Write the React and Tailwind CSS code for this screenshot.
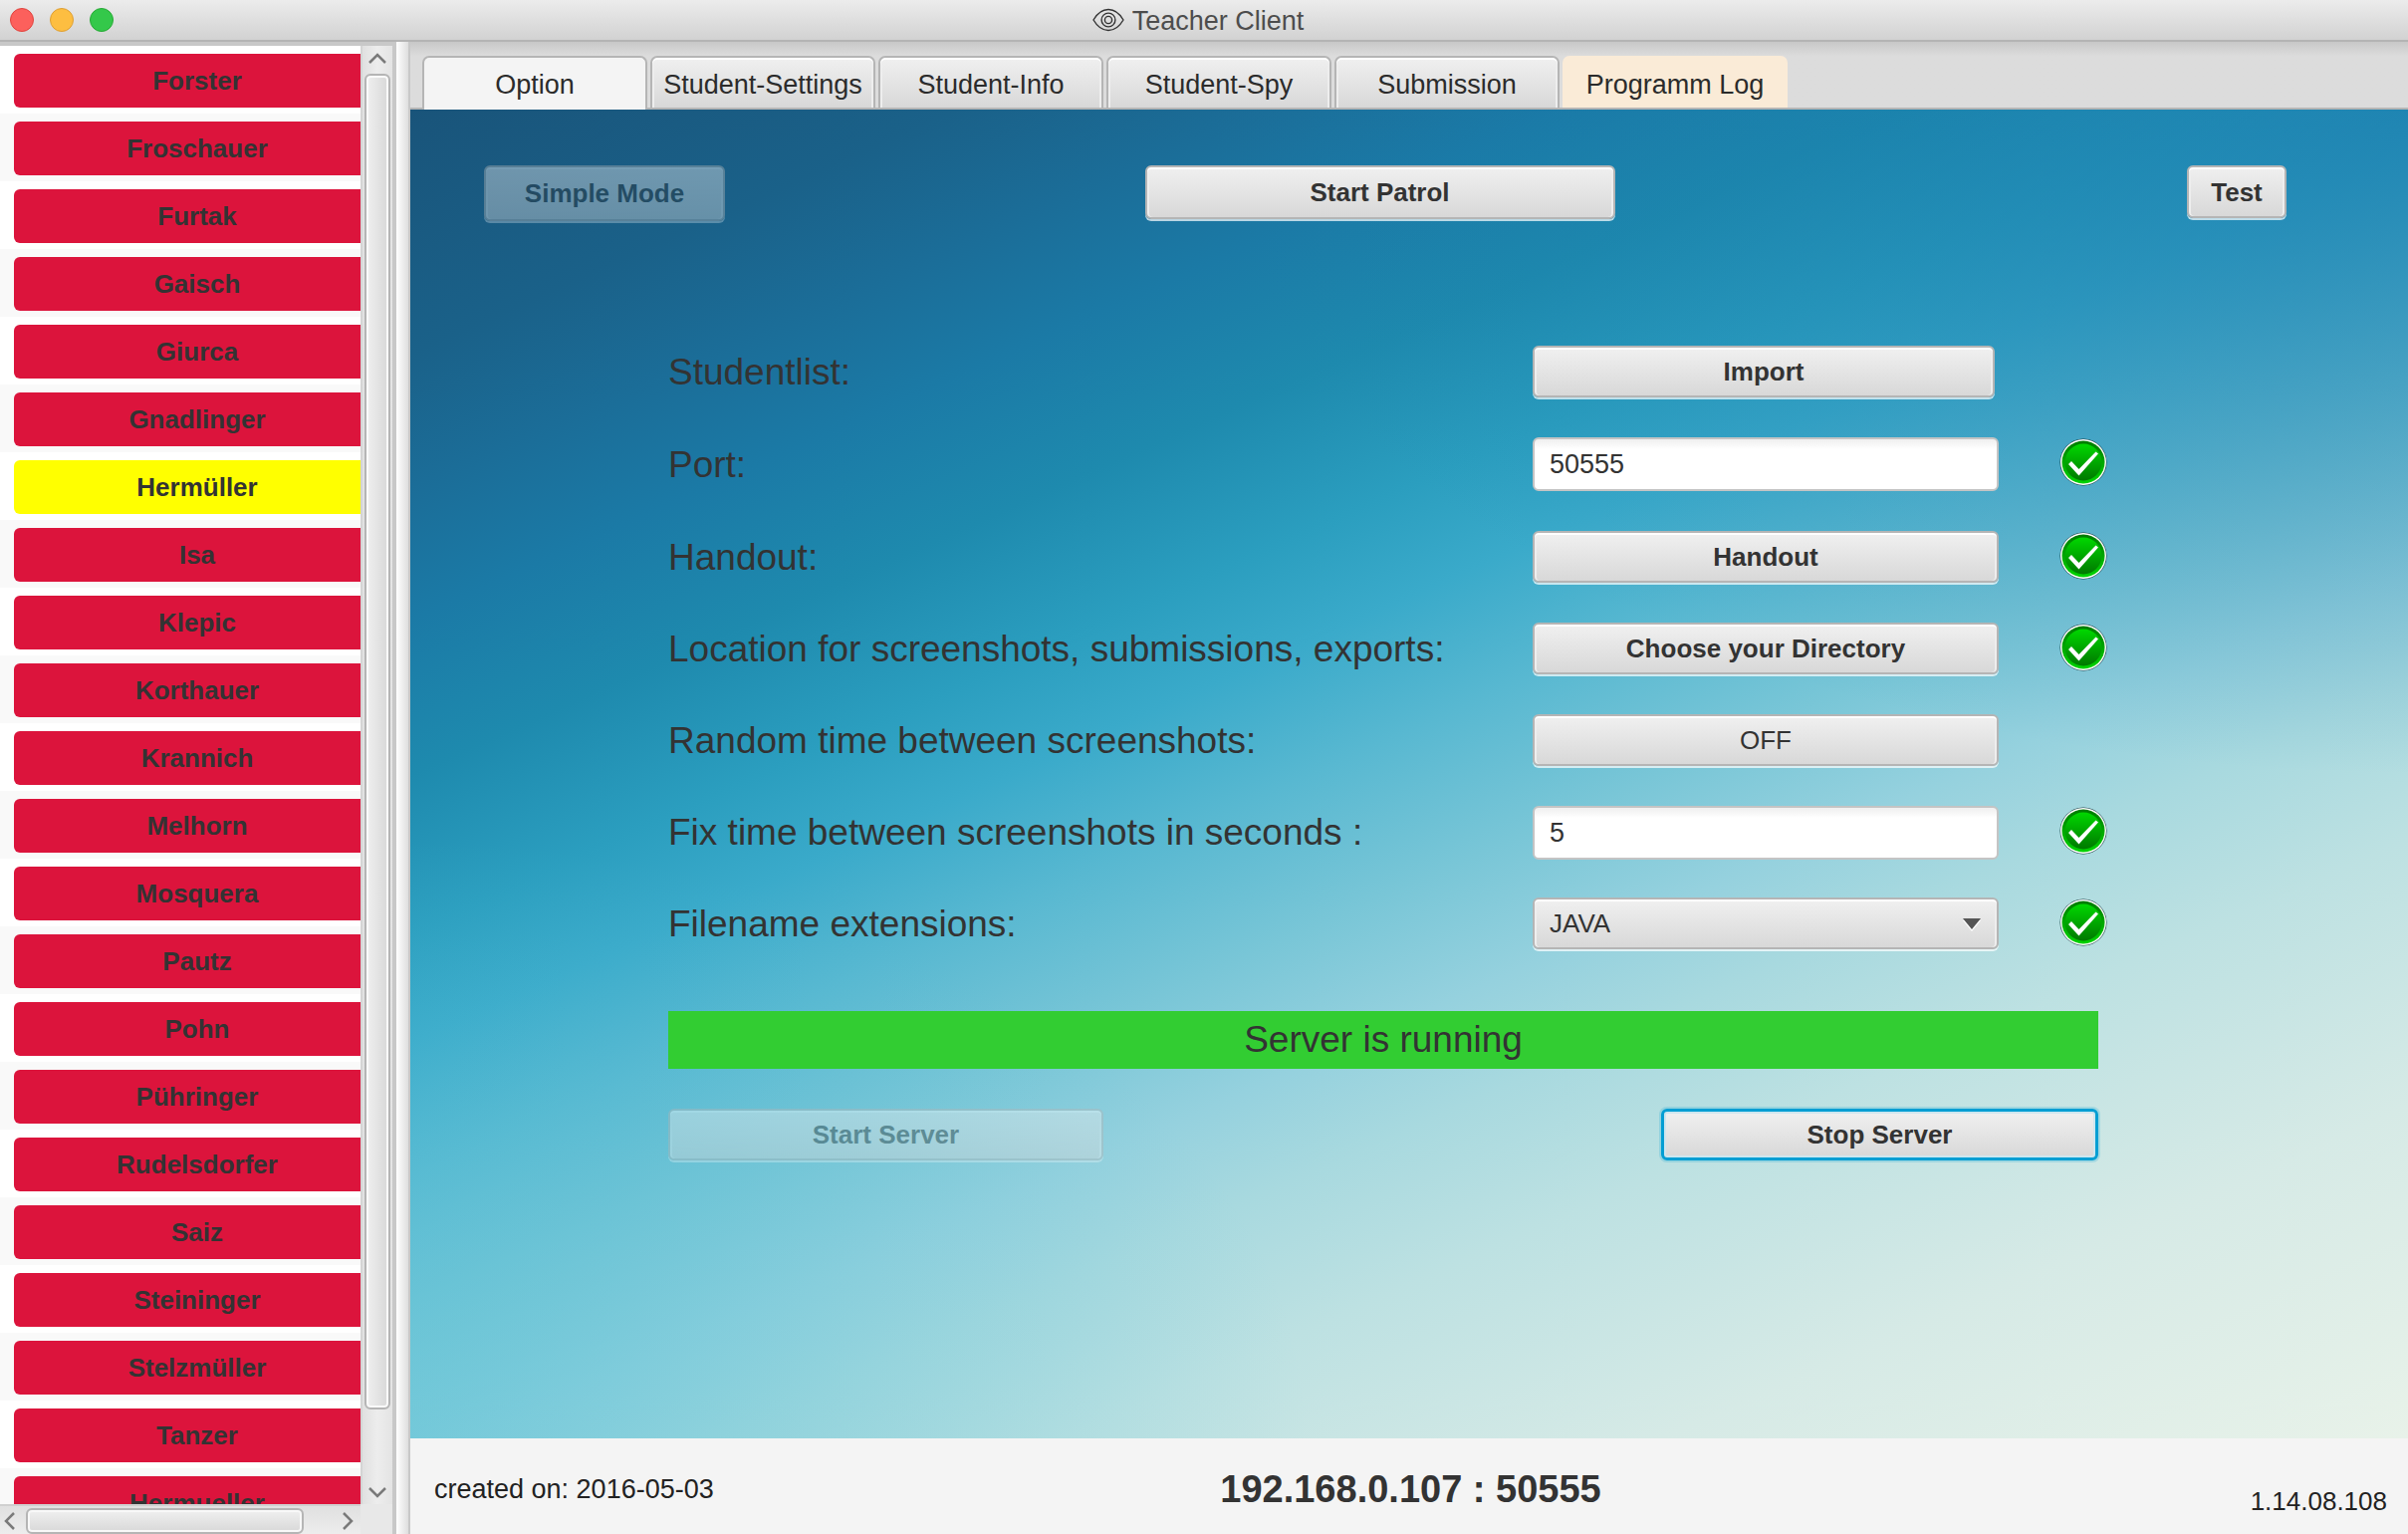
import React, { useState } from "react";

const students = [
  "Forster", "Froschauer", "Furtak", "Gaisch", "Giurca", "Gnadlinger", "Hermüller", "Isa",
  "Klepic", "Korthauer", "Krannich", "Melhorn", "Mosquera", "Pautz", "Pohn", "Pühringer",
  "Rudelsdorfer", "Saiz", "Steininger", "Stelzmüller", "Tanzer", "Hermueller",
];

const tabs = ["Option", "Student-Settings", "Student-Info", "Student-Spy", "Submission", "Programm Log"];

const buttonBase =
  "rounded-[6px] border-2 border-[#b5b5b5] bg-linear-to-b from-[#f0f0f0] to-[#d8d8d8] text-[26px] leading-[30px] text-[#333] ";
const raised = "shadow-[inset_0_2px_0_#fff,inset_2px_0_0_#eee,inset_-2px_0_0_#eee,0_2px_0_rgba(255,255,255,0.7)] ";

function Button({ className = "", ...props }) {
  return <button type="button" className={buttonBase + raised + className} {...props} />;
}

function Eye() {
  return (
    <svg width="32" height="24" viewBox="0 0 32 24" fill="none" stroke="#333" strokeWidth="1.4" aria-hidden="true">
      <path d="M1 12C4.500 6 9 1.500 16 1.500S27.500 6 31 12C27.500 18 23 22.500 16 22.500S4.500 18 1 12Z" />
      <circle cx="16" cy="12" r="6.900" />
      <circle cx="16" cy="12" r="3.600" />
    </svg>
  );
}

function Check() {
  return (
    <svg width="48" height="48" viewBox="0 0 48 48" role="img" aria-label="valid">
      <defs>
        <linearGradient id="checkFace" x1="0" y1="0" x2="0" y2="1">
          <stop offset="0" stopColor="#00d800" />
          <stop offset="1" stopColor="#007800" />
        </linearGradient>
        <linearGradient id="checkRim" x1="0" y1="0" x2="0" y2="1">
          <stop offset="0" stopColor="#007a00" />
          <stop offset="1" stopColor="#00d400" />
        </linearGradient>
      </defs>
      <circle cx="24" cy="24" r="23.500" fill="#12393c" />
      <circle cx="24" cy="24" r="23" fill="#fff" />
      <circle cx="24" cy="24" r="21.500" fill="url(#checkRim)" />
      <circle cx="24" cy="24" r="18.500" fill="url(#checkFace)" />
      <path d="M9 26L12 23L19.500 31L36.500 13.500L39 15.500L19.500 37.500Z" fill="#fff" />
    </svg>
  );
}

function Chevron({ d, label, className, w, h }) {
  return (
    <button type="button" aria-label={label} className={"flex shrink-0 items-center justify-center " + className}>
      <svg width={w} height={h} viewBox={`0 0 ${w} ${h}`} fill="none" stroke="#7a7a7a" strokeWidth="2.500">
        <path d={d} />
      </svg>
    </button>
  );
}

function Sidebar() {
  const [selected, setSelected] = useState("Hermüller");
  return (
    <aside className="flex w-[394px] shrink-0 flex-col border-t-4 border-[#c8c8c8] bg-white">
      <div className="flex min-h-0 flex-1">
        <ul className="min-w-0 flex-1 overflow-hidden">
          {students.map((name) => (
            <li key={name} className="h-[68px] pt-2 pl-[14px] odd:bg-white even:bg-[#f9f9f9]">
              <button
                type="button"
                onClick={() => setSelected(name)}
                className={
                  "h-[54px] w-full rounded-l-[6px] pr-2 pl-7 text-[26px] leading-[30px] font-bold text-[#333] " +
                  (name === selected ? "bg-[#ffff00]" : "bg-[#dc143c]")
                }
              >
                {name}
              </button>
            </li>
          ))}
        </ul>
        <div className="flex w-8 flex-col items-center border-l-2 border-[#d4d4d4] bg-linear-to-r from-[#e0e0e0] via-[#ededed] to-[#e4e4e4]">
          <Chevron label="Scroll up" w={18} h={11} d="M1 10L9 2L17 10" className="h-7 w-full pb-1" />
          <div className="flex min-h-0 w-[26px] flex-1 flex-col">
            <div className="h-[95%] rounded-[6px] border-2 border-[#b5b5b5] bg-linear-to-r from-[#f0f0f0] to-[#d8d8d8] shadow-[inset_0_0_0_2px_#fafafa]" />
          </div>
          <Chevron label="Scroll down" w={18} h={11} d="M1 1L9 9L17 1" className="h-6 w-full" />
        </div>
      </div>
      <div className="flex h-[30px] shrink-0">
        <div className="flex min-w-0 flex-1 items-end border-t-2 border-[#d0d0d0] bg-linear-to-b from-[#e0e0e0] to-[#ededed]">
          <Chevron label="Scroll left" w={11} h={18} d="M10 1L2 9L10 17" className="h-[26px] w-[26px] pr-2" />
          <div className="flex min-w-0 flex-1">
            <div className="h-[26px] w-[90%] rounded-[6px] border-2 border-[#b5b5b5] bg-linear-to-b from-[#f0f0f0] to-[#d8d8d8] shadow-[inset_0_0_0_2px_#f8f8f8]" />
          </div>
          <Chevron label="Scroll right" w={11} h={18} d="M1 1L9 9L1 17" className="h-[26px] w-[26px]" />
        </div>
        <div className="w-8 bg-[#e8e8e8]" />
      </div>
    </aside>
  );
}

function Field({ id, label, children, ok, tall }) {
  return (
    <div className="flex items-start">
      <label htmlFor={id} className={"flex min-w-0 flex-1 items-center text-[37px] leading-[42px] text-[#333] " + (tall ? "h-14" : "h-[54px]")}>
        {label}
      </label>
      <div className="flex w-[468px] shrink-0">{children}</div>
      <div className="ml-[61px] w-12 shrink-0 pt-px">{ok && <Check />}</div>
    </div>
  );
}

const inputClass =
  "h-[54px] w-full rounded-[6px] border-2 border-[#c4c4c4] bg-white bg-linear-to-b from-[#efefef] to-white to-[10px] pl-[15px] text-[27px] leading-8 text-[#333]";

function Options() {
  const [port, setPort] = useState("50555");
  const [seconds, setSeconds] = useState("5");
  return (
    <main className="flex flex-1 flex-col bg-[radial-gradient(ellipse_60%_50%_at_100%_0%,rgba(24,122,172,0.75),rgba(24,122,172,0)),radial-gradient(ellipse_45%_45%_at_0%_100%,rgba(88,195,214,0.5),rgba(88,195,214,0)),linear-gradient(156deg,#19547a_0%,#1a6189_11%,#1b6d98_17%,#1b7aa6_23%,#1e8aae_30%,#2b9ebf_37%,#3aaaca_42%,#58b8d1_48%,#79c6d7_55%,#95d1de_61%,#a8d9df_66%,#bde1e2_73%,#d6eae6_85%,#e8f2e9_100%)] pt-14">
      <div className="grid h-[58px] grid-cols-[1fr_auto_1fr] items-start pr-[122px] pl-[74px]">
        <Button disabled className="h-14 w-[242px] font-bold opacity-40">Simple Mode</Button>
        <Button className="mr-[11px] h-[54px] w-[472px] font-bold">Start Patrol</Button>
        <Button className="h-[53px] w-[100px] justify-self-end font-bold">Test</Button>
      </div>
      <form className="mt-[123px] flex flex-col pr-[302px] pl-[259px]" onSubmit={(e) => e.preventDefault()}>
        <div className="flex flex-col gap-[38px]">
          <Field id="import" label="Studentlist:">
            <Button id="import" className="mr-1 h-[52px] w-full font-bold">Import</Button>
          </Field>
          <Field id="port" label="Port:" ok tall>
            <input id="port" value={port} onChange={(e) => setPort(e.target.value)} className={inputClass} />
          </Field>
          <Field id="handout" label="Handout:" ok>
            <Button id="handout" className="h-[52px] w-full font-bold">Handout</Button>
          </Field>
          <Field id="location" label="Location for screenshots, submissions, exports:" ok>
            <Button id="location" className="h-[52px] w-full font-bold">Choose your Directory</Button>
          </Field>
          <Field id="random" label="Random time between screenshots:">
            <Button id="random" className="h-[52px] w-full">OFF</Button>
          </Field>
          <Field id="seconds" label="Fix time between screenshots in seconds :" ok>
            <input id="seconds" value={seconds} onChange={(e) => setSeconds(e.target.value)} className={inputClass} />
          </Field>
          <Field id="ext" label="Filename extensions:" ok>
            <div className="relative w-full">
              <select id="ext" className={buttonBase + raised + "h-[52px] w-full appearance-none pl-[15px]"}>
                <option>JAVA</option>
              </select>
              <svg className="pointer-events-none absolute top-[21px] right-[18px]" width="18" height="14" viewBox="0 0 18 14" aria-hidden="true">
                <path d="M0 2H18L9 13Z" fill="#fff" />
                <path d="M0 0H18L9 11Z" fill="#555" />
              </svg>
            </div>
          </Field>
        </div>
        <output className="mt-[60px] mr-[9px] flex h-[58px] items-center justify-center bg-[#32cd32] text-[37px] leading-[42px] text-[#333]">
          Server is running
        </output>
        <div className="mt-10 mr-[9px] flex justify-between">
          <Button disabled className="h-[52px] w-[437px] font-bold opacity-40">Start Server</Button>
          <button
            type="button"
            className="h-[52px] w-[439px] rounded-[6px] border-[3px] border-[#039ed3] bg-linear-to-b from-[#f0f0f0] to-[#d8d8d8] text-[26px] leading-[30px] font-bold text-[#333] shadow-[inset_0_0_0_2px_#cde6ef,0_0_0_2px_rgba(3,158,211,0.2)]"
          >
            Stop Server
          </button>
        </div>
      </form>
    </main>
  );
}

export default function App() {
  const [tab, setTab] = useState("Option");
  return (
    <div className="flex h-screen flex-col overflow-hidden bg-[#f4f4f4] font-['Liberation_Sans',Arial,sans-serif]">
      <header className="relative flex h-[42px] shrink-0 items-center justify-center gap-2 border-b-2 border-[#b4b4b4] bg-linear-to-b from-[#ececec] to-[#d2d2d2] pr-3">
        <div className="absolute top-2 left-[10px] flex gap-4">
          <button type="button" aria-label="Close" className="size-6 rounded-full border border-[#e0443e] bg-[#fc605c]" />
          <button type="button" aria-label="Minimize" className="size-6 rounded-full border border-[#dea034] bg-[#fdbe41]" />
          <button type="button" aria-label="Zoom" className="size-6 rounded-full border border-[#27aa35] bg-[#34c84a]" />
        </div>
        <Eye />
        <h1 className="pt-[2px] text-[27px] leading-8 text-[#4d4d4d]">Teacher Client</h1>
      </header>
      <div className="flex min-h-0 flex-1">
        <Sidebar />
        <div className="w-[18px] shrink-0 border-r-2 border-l-4 border-[#c8c8c8] bg-linear-to-r from-white to-[#dedede]" />
        <section className="flex min-w-0 flex-1 flex-col">
          <nav role="tablist" className="flex h-[68px] shrink-0 items-end gap-[3px] bg-linear-to-b from-[#c8c8c8] to-[#dcdcdc] to-[14px] pl-3 shadow-[inset_0_-2px_0_#b5b5b5]">
            {tabs.map((t) => (
              <button
                key={t}
                type="button"
                role="tab"
                aria-selected={t === tab}
                onClick={() => setTab(t)}
                className={
                  "w-[226px] rounded-t-[7px] text-[27px] leading-8 whitespace-nowrap text-[#2b2b2b] " +
                  (t === "Programm Log"
                    ? "mb-[2px] h-[52px] bg-[#faebd7] pt-[6px]"
                    : t === tab
                      ? "h-[54px] border-2 border-b-0 border-[#b5b5b5] bg-[#f4f4f4] pt-[2px]"
                      : "h-[54px] border-2 border-[#b5b5b5] bg-linear-to-b from-[#f0f0f0] to-[#d8d8d8] pt-1 shadow-[inset_0_2px_0_#fff,inset_2px_0_0_#eee,inset_-2px_0_0_#eee]")
                }
              >
                {t}
              </button>
            ))}
          </nav>
          <Options />
          <footer className="grid h-24 shrink-0 grid-cols-[1fr_auto_1fr] items-center pr-[21px] pl-6 text-[#222]">
            <p className="pt-[6px] text-[27px] leading-8">created on: 2016-05-03</p>
            <p className="pt-[6px] text-[38px] leading-[44px] font-bold text-[#333]">192.168.0.107 : 50555</p>
            <p className="justify-self-end pt-[30px] text-[26px] leading-8">1.14.08.108</p>
          </footer>
        </section>
      </div>
    </div>
  );
}
